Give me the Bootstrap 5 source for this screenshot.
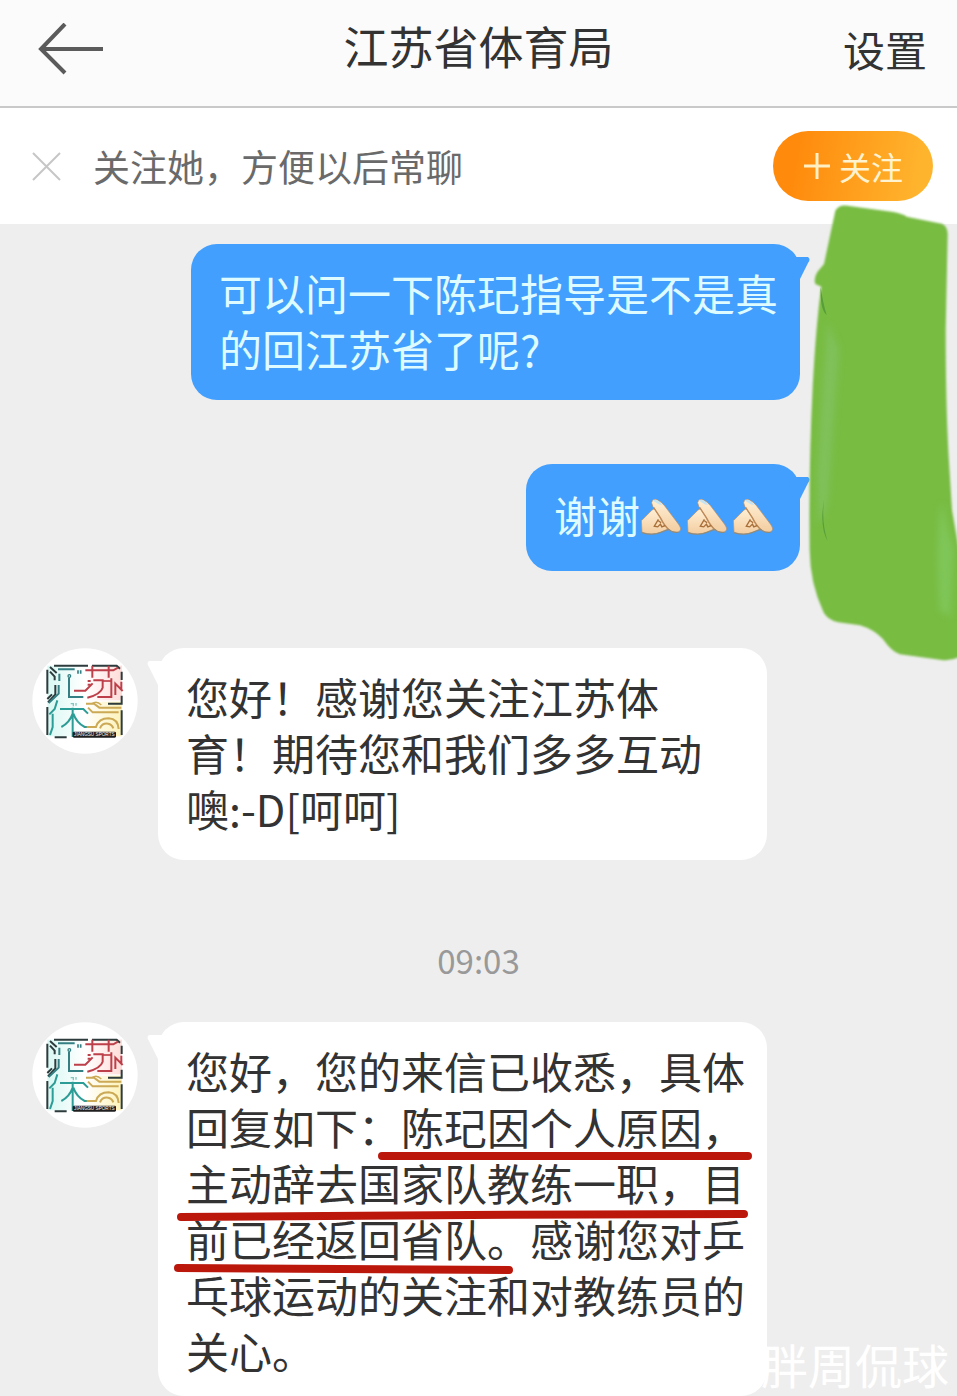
<!DOCTYPE html>
<html lang="zh-CN">
<head>
<meta charset="utf-8">
<meta name="viewport" content="width=device-width, initial-scale=1">
<title>江苏省体育局</title>
<link rel="stylesheet" href="https://cdn.jsdelivr.net/npm/bootstrap@5.3.0/dist/css/bootstrap.min.css">
<style>
  body { font-family: "Noto Sans CJK SC", sans-serif; background: #eeeeee; color: #333; }
  .topbar { height: 108px; padding: 0 30px 8px; background: #fbfbfb; border-bottom: 2px solid #c9c9c9; }
  .topbar .side { flex: 1 1 0; }
  .topbar h1 { font-size: 45px; line-height: 56px; font-weight: 400; padding-bottom: 6px; }
  .settings { font-size: 42px; line-height: 56px; color: #333; }
  .tip { height: 116px; padding: 0 24px 0 32px; background: #fff; }
  .tip p { font-size: 37px; line-height: 56px; color: #6a6a6a; margin-left: 32px; }
  .follow { width: 160px; height: 70px; border-radius: 35px; font-size: 32px; line-height: 40px; color: #fff3d0;
            background: linear-gradient(100deg, #ff8a0c 15%, #ffb42e 90%); }
  .chat { padding: 20px 0 0 32px; }
  .outgoing { padding-right: 157px; }
  .bubble { position: relative; max-width: 609px; padding: 20px 22px 24px 28px; border-radius: 26px;
            font-size: 43px; line-height: 56px; }
  .bubble-blue { background: #429ffd; color: #defbff; }
  .bubble-white { background: #fff; width: 609px; }
  .gap-row { margin-bottom: 64px; }
  .single { padding-top: 22px; padding-bottom: 29px; }
  .tail { position: absolute; top: 12px; }
  .tail-right { right: -10px; }
  .tail-left { left: -11px; }
  .avatar { width: 106px; height: 106px; margin-right: 20px; }
  .incoming { margin-bottom: 72px; }
  .incoming-first { margin-top: 77px; }
  .stamp { font-size: 33px; line-height: 56px; color: #999; margin: 0 0 34px -32px; }
  .last { padding-bottom: 18px; }
  .marker { position: absolute; left: 12px; top: 120px; }
  .scribble { position: absolute; right: 0; top: -20px; }
  .hands { margin-top: 8px; }
  .watermark { position: absolute; right: 8px; bottom: 2px; font-size: 47px; line-height: 60px; color: #fff; }
</style>
</head>
<body>
<svg width="0" height="0" class="position-absolute" aria-hidden="true">
  <defs>
    <filter id="soft" x="-30%" y="-10%" width="160%" height="120%"><feGaussianBlur stdDeviation="9"/></filter>
    <filter id="edge"><feGaussianBlur stdDeviation="3"/></filter>
    <linearGradient id="skin" x1="0" y1="0" x2="0" y2="1">
      <stop offset="0" stop-color="#fff0d6"/><stop offset="1" stop-color="#f3cda0"/>
    </linearGradient>
    <symbol id="hand" viewBox="0 0 135 116">
      <path d="M4 66 L34 36 Q42 27 50 36 L80 68 L84 90 Q72 94 62 99 Q36 110 6 100 Z" fill="url(#skin)" stroke="#b79269" stroke-width="2"/>
      <path d="M34 13 Q38 -1 51 5 Q63 10 72 22 L113 76 Q126 94 112 99 Q96 102 83 92 Q66 74 55 50 L38 25 Z" fill="url(#skin)" stroke="#b98f68" stroke-width="2"/>
      <path d="M37 7 Q45 1 55 9 L66 20 Q56 20 49 14 Z" fill="#c2e4f5"/>
      <path d="M40 27 L61 59 Q72 82 88 95" fill="none" stroke="#bd8a58" stroke-width="4"/>
      <path d="M54 62 L42 82 L52 84 L60 76 L64 84 L74 80 M62 72 L54 66" fill="none" stroke="#a96e38" stroke-width="4"/>
      <path d="M6 101 Q36 111 62 100 L84 91 Q96 103 113 100" fill="none" stroke="#8f8978" stroke-width="3"/>
    </symbol>
    <linearGradient id="tintTeal" x1="0" y1="0" x2="1" y2="0"><stop offset="0" stop-color="#d9f8f3"/><stop offset="1" stop-color="#fff"/></linearGradient>
    <linearGradient id="tintRed" x1="0" y1="0" x2="1" y2="0"><stop offset="0" stop-color="#fff"/><stop offset="1" stop-color="#ffdcd8"/></linearGradient>
    <linearGradient id="tintGold" x1="0" y1="0" x2="1" y2="0"><stop offset="0" stop-color="#fff"/><stop offset="1" stop-color="#fdf2b8"/></linearGradient>
    <symbol id="crest" viewBox="36 39 318 318">
      <circle cx="195" cy="198" r="158" fill="#fff"/>
      <rect x="82" y="92" width="112" height="212" fill="url(#tintTeal)"/>
      <rect x="196" y="92" width="110" height="104" fill="url(#tintRed)"/>
      <rect x="196" y="200" width="110" height="104" fill="url(#tintGold)"/>
      <g fill="none" stroke-width="6">
        <g stroke="#2d3b3d">
          <path d="M102 92 H204 M216 92 H290 L300 101 M82 104 V176 M82 192 L96 178 M82 216 V300 M104 307 H140 M305 110 V135 M305 182 V206 H264 M305 226 V300"/>
          <path d="M90 96 L110 114 M90 110 L104 125 V136 M84 202 L106 178 V150"/>
        </g>
        <g stroke="#347f83">
          <path d="M114 103 H164 M147 128 V186 H190 M118 116 V138 M86 204 L116 176 V150"/>
          <path d="M174 106 V116 M182 106 V116" stroke-width="5"/>
          <circle cx="148" cy="123" r="4" stroke-width="4"/>
        </g>
        <g stroke="#2c9c96">
          <path d="M112 196 L104 222 L88 238 M98 236 V276 L90 300 M120 222 H190 L204 236 M158 218 V306 M158 236 Q148 264 124 276 M160 236 Q170 264 194 276 H202"/>
          <path d="M152 206 H160 V214 M168 204 V212" stroke-width="4" stroke="#84c6bf"/>
        </g>
        <g stroke="#bd3f49">
          <path d="M196 106 H280 L294 98 M217 92 V128 M266 92 V128 M162 167 H196 L218 145 M220 136 H248 V158 Q242 178 202 188 M274 130 V186 H232 M286 180 V146 L308 168 M304 140 V162"/>
          <path d="M203 138 H212 M203 149 H212"/>
          <path d="M248 138 H274" stroke-width="5"/>
        </g>
        <g stroke="#cba955">
          <path d="M198 206 H222 L238 218 H304 M204 218 L218 232 H296 M200 276 H228 Q236 250 266 250 Q294 252 296 282 M240 280 Q246 264 264 266 Q276 268 280 280"/>
          <path d="M216 206 Q230 196 244 210" stroke-width="4"/>
        </g>
      </g>
      <rect x="158" y="290" width="130" height="18" rx="4" fill="#1f1f1f"/>
      <text x="223" y="304" text-anchor="middle" font-family="Liberation Sans, sans-serif" font-size="14" fill="#f5f5f5">JIANGSU SPORTS</text>
    </symbol>
  </defs>
</svg>

<div class="position-relative overflow-hidden min-vh-100">
  <header class="topbar d-flex align-items-center">
    <div class="side">
      <button type="button" class="btn p-0 border-0 d-flex ms-2" aria-label="返回">
        <svg width="66" height="52" viewBox="0 0 66 52" fill="none" stroke="#5b5b5b" stroke-width="4"><path d="M27 1 L3 26 L27 50 M3 26 H65"/></svg>
      </button>
    </div>
    <h1 class="m-0">江苏省体育局</h1>
    <div class="side text-end"><a href="#" class="settings d-inline-block text-decoration-none">设置</a></div>
  </header>

  <section class="tip d-flex align-items-center">
    <button type="button" class="btn p-0 border-0 d-flex" aria-label="关闭">
      <svg width="29" height="29" viewBox="0 0 29 29" fill="none" stroke="#c6c6c6" stroke-width="2"><path d="M1 1 L28 28 M28 1 L1 28"/></svg>
    </button>
    <p class="mb-0 flex-grow-1">关注她，方便以后常聊</p>
    <button type="button" class="follow btn border-0 p-0 d-flex align-items-center justify-content-center gap-2">
      <svg width="28" height="28" viewBox="0 0 28 28" fill="none" stroke="#fff0c4" stroke-width="3"><path d="M14 1 V27 M1 14 H27"/></svg>
      <span>关注</span>
    </button>
  </section>

  <main class="chat position-relative">
    <div class="outgoing d-flex justify-content-end gap-row">
      <div class="bubble bubble-blue">可以问一下陈玘指导是不是真的回江苏省了呢?
        <svg class="tail tail-right" width="22" height="30" viewBox="0 0 22 30"><path d="M0 1 H20 Q23 3 20 7 L11 25 L6 26 Z" fill="#429ffd"/></svg>
      </div>
    </div>
    <div class="outgoing d-flex justify-content-end">
      <div class="bubble bubble-blue single d-flex align-items-center">谢谢<span class="hands d-flex" role="img" aria-label="合十">
          <svg width="46" height="40"><use href="#hand"/></svg><svg width="46" height="40"><use href="#hand"/></svg><svg width="46" height="40"><use href="#hand"/></svg>
        </span>
        <svg class="tail tail-right" width="22" height="30" viewBox="0 0 22 30"><path d="M0 1 H20 Q23 3 20 7 L11 25 L6 26 Z" fill="#429ffd"/></svg>
      </div>
    </div>

    <div class="incoming incoming-first d-flex align-items-start">
      <svg class="avatar flex-shrink-0" role="img" aria-label="江苏体育"><use href="#crest"/></svg>
      <div class="bubble bubble-white">您好！感谢您关注江苏体<br>育！期待您和我们多多互动<br>噢:-D[呵呵]
        <svg class="tail tail-left" width="22" height="30" viewBox="0 0 22 30"><path d="M22 1 H2 Q-1 3 2 7 L11 25 L16 26 Z" fill="#fff"/></svg>
      </div>
    </div>

    <time class="stamp d-block text-center">09:03</time>

    <div class="d-flex align-items-start">
      <svg class="avatar flex-shrink-0" role="img" aria-label="江苏体育"><use href="#crest"/></svg>
      <div class="bubble bubble-white last">您好，您的来信已收悉，具体回复如下：陈玘因个人原因，主动辞去国家队教练一职，目前已经返回省队。感谢您对乒乓球运动的关注和对教练员的关心。
        <svg class="tail tail-left" width="22" height="30" viewBox="0 0 22 30"><path d="M22 1 H2 Q-1 3 2 7 L11 25 L16 26 Z" fill="#fff"/></svg>
        <svg class="marker" width="590" height="136" viewBox="0 0 590 136" fill="none" stroke="#bb170b" stroke-width="8" stroke-linecap="round">
          <path d="M212 14 H578 M11 75 L300 73 L574 72 M8 126 L170 127 L339 128"/>
        </svg>
      </div>
    </div>

    <svg class="scribble" width="150" height="460" viewBox="141 42 450 1380" aria-hidden="true">
      <path filter="url(#edge)" d="M226 62 Q236 44 262 47 L400 66 Q430 72 440 80 L545 101 Q564 108 563 135 L557 420 Q557 640 566 800 L576 960 L605 1130 V1398 Q575 1414 545 1410 L420 1393 Q395 1385 368 1346 Q340 1318 300 1306 L235 1297 Q200 1288 190 1265 Q150 1180 149 1080 Q146 830 158 590 Q168 400 184 290 L166 282 Q160 266 172 246 L192 222 Z" fill="#78bc43"/>
      <path filter="url(#soft)" d="M204 400 Q180 700 172 860 L176 1000 Q205 960 206 900 Q224 640 236 480 Z" fill="#80c15a"/>
      <path d="M182 292 Q190 345 200 375 Q180 360 182 292 M192 930 Q184 1000 203 1054 Q178 1010 192 930" fill="#579d3a"/>
      <path filter="url(#soft)" d="M545 940 Q525 1060 540 1260 L570 1280 L580 1080 Z" fill="#7fc658"/>
    </svg>
  </main>
  <div class="watermark">胖周侃球</div>
</div>
<script src="https://cdn.jsdelivr.net/npm/bootstrap@5.3.0/dist/js/bootstrap.bundle.min.js"></script>
</body>
</html>
